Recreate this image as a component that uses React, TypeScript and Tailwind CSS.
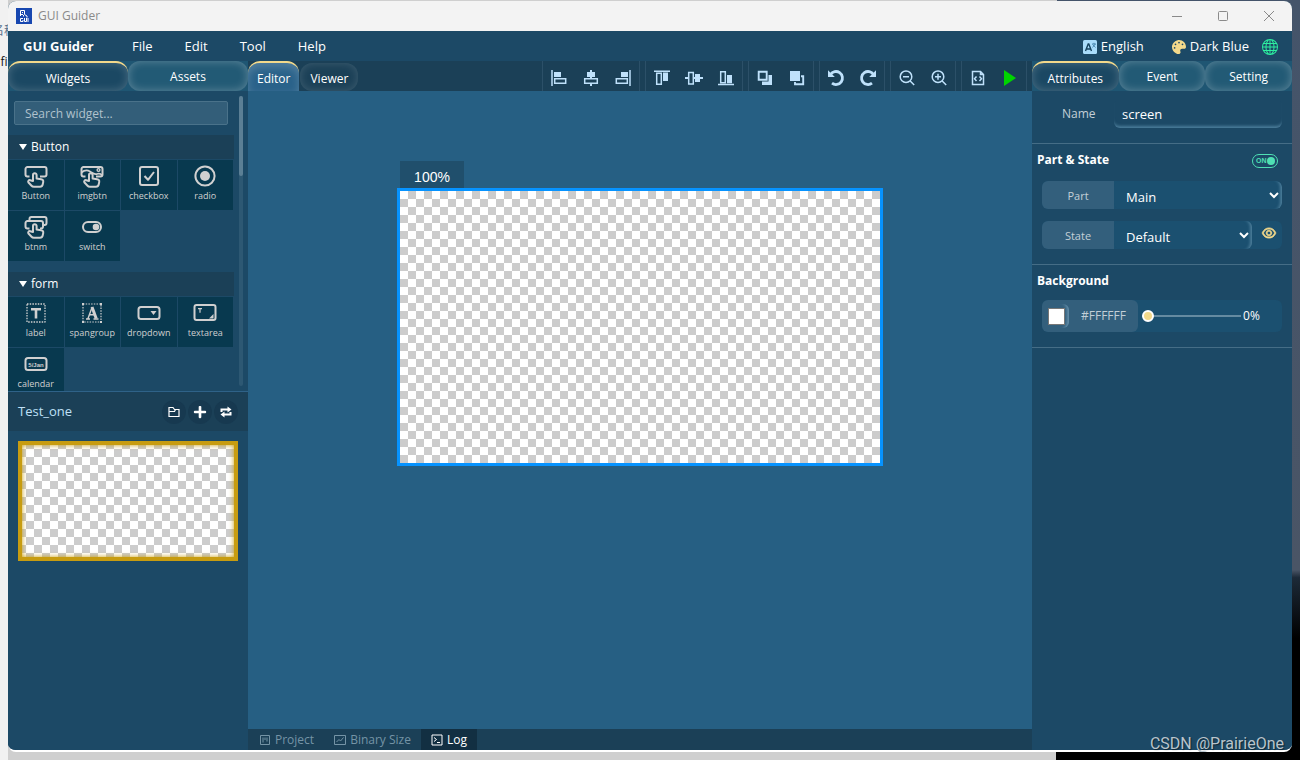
import { useState } from "react";
import type { ReactNode } from "react";
import { FaPalette, FaPlus } from "react-icons/fa";
import { AiOutlineEye } from "react-icons/ai";
import { BsGlobe } from "react-icons/bs";

/* -------------------- ICONS -------------------- */

const HAND =
  "M9 17v-6a1.800 1.800 0 0 1 3.600 0v3.500l4.500.8c1.700.3 2.400 1.200 2.100 2.800l-.5 2.400c-.3 1.500-1.200 2.200-2.700 2.200H10c-1.200 0-2-.4-2.700-1.200L4.500 18.500c-.9-1.100.2-2.700 1.700-2.300z";

function WidgetIcon({ children }: { children: ReactNode }) {
  return (
    <svg
      viewBox="0 0 24 24"
      className="size-6"
      fill="none"
      stroke="currentColor"
      strokeWidth="2"
      strokeLinejoin="round"
      aria-hidden="true"
    >
      {children}
    </svg>
  );
}

const icons: Record<string, ReactNode> = {
  Button: (
    <WidgetIcon>
      <path d="M5.500 12.500H3.500a2 2 0 0 1-2-2V5a2 2 0 0 1 2-2h17a2 2 0 0 1 2 2v5.500a2 2 0 0 1-2 2H16" />
      <path d={HAND} />
    </WidgetIcon>
  ),
  imgbtn: (
    <WidgetIcon>
      <path d="M5.500 12.500H3.500a2 2 0 0 1-2-2V5a2 2 0 0 1 2-2h17a2 2 0 0 1 2 2v5.500a2 2 0 0 1-2 2H16" />
      <path d="M1.500 8.500c3-2.500 6-2.500 8.500-1s4 3.500 7 2.500 4 0 5 1.500" strokeWidth="1.800" />
      <circle cx="18.500" cy="6" r="1.400" strokeWidth="1.400" />
      <path d={HAND} />
    </WidgetIcon>
  ),
  checkbox: (
    <WidgetIcon>
      <rect x="3" y="3" width="18" height="18" rx="2" />
      <path d="M7.500 12l3.500 3.800L17 8" />
    </WidgetIcon>
  ),
  radio: (
    <WidgetIcon>
      <circle cx="12" cy="12" r="9.600" />
      <circle cx="12" cy="12" r="5" fill="currentColor" stroke="none" />
    </WidgetIcon>
  ),
  btnm: (
    <WidgetIcon>
      <path d="M5.500 5V4a2 2 0 0 1 2-2h13a2 2 0 0 1 2 2v4a2 2 0 0 1-2 2H19" />
      <path d="M5.500 13.500H3.500a2 2 0 0 1-2-2V8a2 2 0 0 1 2-2H17a2 2 0 0 1 2 2v3.500a2 2 0 0 1-2 2h-1" />
      <path d={HAND} />
    </WidgetIcon>
  ),
  switch: (
    <WidgetIcon>
      <rect x="3" y="7" width="18" height="10" rx="5" />
      <circle cx="16" cy="12" r="3.300" fill="currentColor" stroke="none" />
    </WidgetIcon>
  ),
  label: (
    <WidgetIcon>
      <rect x="3" y="3" width="18" height="18" strokeWidth="1.300" strokeDasharray="1.500 1.200" />
      <path d="M7 8.200h10M12 8v9.500" strokeWidth="2.600" />
    </WidgetIcon>
  ),
  spangroup: (
    <WidgetIcon>
      <rect x="3" y="3" width="18" height="18" strokeWidth="1.200" strokeDasharray="1.500 1.200" />
      <path
        d="M2 2h2v2H2zM20 2h2v2h-2zM2 20h2v2H2zM20 20h2v2h-2z"
        fill="currentColor"
        stroke="none"
      />
      <path d="M6 18h4M13.500 18h5M8 17.500L12.200 6M9.500 13.800h5" strokeWidth="1.400" />
      <path d="M12 6l4.200 11.500" strokeWidth="3" />
    </WidgetIcon>
  ),
  dropdown: (
    <WidgetIcon>
      <rect x="1.500" y="6" width="21" height="12" rx="2.500" />
      <path d="M13.500 10h6l-3 4z" fill="currentColor" stroke="none" />
    </WidgetIcon>
  ),
  textarea: (
    <WidgetIcon>
      <rect x="1.500" y="4" width="21" height="15" rx="2" />
      <path d="M5 7.700h4M7 7.700v4" strokeWidth="1.200" />
      <path d="M20.500 13v4.500H16z" fill="currentColor" stroke="none" />
    </WidgetIcon>
  ),
  calendar: (
    <WidgetIcon>
      <rect x="1.500" y="6" width="21" height="12" rx="2.500" />
      <text
        x="12"
        y="14.500"
        textAnchor="middle"
        fontSize="6"
        fontWeight="700"
        fill="currentColor"
        stroke="none"
        fontFamily="Liberation Sans, sans-serif"
      >
        5/Jan
      </text>
    </WidgetIcon>
  ),
};

function ToolIcon({ children }: { children: ReactNode }) {
  return (
    <svg
      viewBox="0 0 18 18"
      className="size-[18px]"
      fill="none"
      stroke="currentColor"
      strokeWidth="1.500"
      aria-hidden="true"
    >
      {children}
    </svg>
  );
}

const solid = { fill: "currentColor", stroke: "none" };

const toolGroups: { name: string; icon: ReactNode }[][] = [
  [
    {
      name: "Align left",
      icon: (
        <ToolIcon>
          <path d="M2 1v16" />
          <path d="M4 3h7v5H4z" {...solid} />
          <path d="M4.700 9.700h11v4.600h-11z" />
        </ToolIcon>
      ),
    },
    {
      name: "Align center",
      icon: (
        <ToolIcon>
          <path d="M9 1v2M9 15v2M9 8v2" strokeWidth="2" />
          <path d="M5 3h8v5H5z" {...solid} />
          <path d="M2.700 9.700h12.600v4.600H2.700z" />
        </ToolIcon>
      ),
    },
    {
      name: "Align right",
      icon: (
        <ToolIcon>
          <path d="M16 1v16" />
          <path d="M7 3h7v5H7z" {...solid} />
          <path d="M2.300 9.700h11v4.600h-11z" />
        </ToolIcon>
      ),
    },
  ],
  [
    {
      name: "Align top",
      icon: (
        <ToolIcon>
          <path d="M1 2.300h16" />
          <path d="M3.700 4.200h4.600v11H3.700z" />
          <path d="M10 3.500h5V12h-5z" {...solid} />
        </ToolIcon>
      ),
    },
    {
      name: "Align middle",
      icon: (
        <ToolIcon>
          <path d="M0 9h4M14 9h4M8 9h2" strokeWidth="2" />
          <path d="M3.700 3.500h4.600v11.500H3.700z" />
          <path d="M10 5h5v8h-5z" {...solid} />
        </ToolIcon>
      ),
    },
    {
      name: "Align bottom",
      icon: (
        <ToolIcon>
          <path d="M1 15.500h16" />
          <path d="M3.700 2.700h4.600v11H3.700z" />
          <path d="M10 6h5v8.200h-5z" {...solid} />
        </ToolIcon>
      ),
    },
  ],
  [
    {
      name: "Bring forward",
      icon: (
        <ToolIcon>
          <path d="M2.700 2.700h8v8h-8z" strokeWidth="1.900" />
          <path d="M12.500 6H16v10H6v-3.500h6.500z" {...solid} />
        </ToolIcon>
      ),
    },
    {
      name: "Send backward",
      icon: (
        <ToolIcon>
          <path d="M2 2h10v10H2z" {...solid} />
          <path d="M13 7.200h2.200v8H7V13" strokeWidth="1.900" />
        </ToolIcon>
      ),
    },
  ],
  [
    {
      name: "Undo",
      icon: (
        <ToolIcon>
          <path d="M3.500 5.500A6.500 6.500 0 1 1 5 14.200" strokeWidth="2.800" />
          <path d="M1 1.200V8h6.800z" {...solid} />
        </ToolIcon>
      ),
    },
    {
      name: "Redo",
      icon: (
        <ToolIcon>
          <path d="M14.500 5.500A6.500 6.500 0 1 0 13 14.200" strokeWidth="2.800" />
          <path d="M17 1.200V8h-6.800z" {...solid} />
        </ToolIcon>
      ),
    },
  ],
  [
    {
      name: "Zoom out",
      icon: (
        <ToolIcon>
          <circle cx="8" cy="7.700" r="5.800" />
          <path d="M12.200 12l4 4M5 7.700h6" />
        </ToolIcon>
      ),
    },
    {
      name: "Zoom in",
      icon: (
        <ToolIcon>
          <circle cx="8" cy="7.700" r="5.800" />
          <path d="M12.200 12l4 4M5 7.700h6M8 4.700v6" />
        </ToolIcon>
      ),
    },
  ],
  [
    {
      name: "Generate code",
      icon: (
        <ToolIcon>
          <path d="M3.500 2.500h8l3 3v10h-11zM11.500 2.500v3h3" />
          <path d="M7.500 7.500l-2 2.200 2 2.200M10.500 7.500l2 2.200-2 2.200" />
        </ToolIcon>
      ),
    },
    {
      name: "Run",
      icon: (
        <ToolIcon>
          <path d="M3 1l12 8-12 8z" fill="#00d400" stroke="none" />
        </ToolIcon>
      ),
    },
  ],
];

function AppLogo() {
  return (
    <svg viewBox="0 0 16 16" className="size-4" aria-hidden="true">
      <path d="M0 0h16v16H0z" fill="#1747b0" />
      <g fill="none" stroke="#fff" strokeWidth="1">
        <path d="M4.500 8V2.500h4v4l2.500 1.500v1.500M6 4l1 1M5 6.500h2M7.500 7v1.500" />
        <path d="M7 10.500H4.500v3H7v-1.500M8.500 10v3.500h2V10M12 10v4" />
      </g>
    </svg>
  );
}

/* -------------------- DATA -------------------- */

const widgetGroups = [
  { title: "Button", items: ["Button", "imgbtn", "checkbox", "radio", "btnm", "switch"] },
  { title: "form", items: ["label", "spangroup", "dropdown", "textarea", "calendar"] },
];

const footerTabs = [
  {
    name: "Project",
    icon: <path d="M1.500 1.500h9v9h-9zM4 3.500v5M6 3.500v2.500M8 3.500v4" />,
  },
  {
    name: "Binary Size",
    icon: <path d="M.5 1.500h11v9H.5zM2.500 8l2.500-2.500 1.500 1.500L9.500 3.500" />,
  },
  {
    name: "Log",
    icon: <path d="M1 1h10v10H1zM3 3.500l2.500 2L3 7.500M6 8.500h3" />,
  },
];

/* -------------------- TABS -------------------- */

type TabProps = { name: string; active: boolean; onClick: () => void };

function PanelTab({ name, active, onClick }: TabProps) {
  return (
    <button
      onClick={onClick}
      className={
        active
          ? "flex-1 rounded-xl border-t-2 border-[#f3d98b] bg-[#1b4863] pt-1 text-[12px] text-white shadow-[inset_0_0_10px_#ffffff38]"
          : "flex-1 rounded-xl bg-[#225a75] pt-px text-[12px] text-white shadow-[inset_0_0_10px_#ffffff48]"
      }
    >
      {name}
    </button>
  );
}

/* -------------------- LEFT PANEL -------------------- */

function LeftPanel() {
  const [tab, setTab] = useState("Widgets");

  return (
    <aside className="flex w-60 shrink-0 flex-col bg-[#1c4966]">
      <div className="flex h-[30px] bg-[#1f5673]">
        {["Widgets", "Assets"].map((t) => (
          <PanelTab key={t} name={t} active={t === tab} onClick={() => setTab(t)} />
        ))}
      </div>

      {/* WIDGET LIST */}
      <div className="flex h-[300px] gap-[5px]">
        <div className="w-[226px] overflow-hidden">
          <div className="px-1.5 pt-2.5">
            <input
              aria-label="Search widget"
              placeholder="Search widget..."
              className="block h-6 w-full rounded-xs border border-[#4a728a] bg-[#335e79] px-2.5 text-[12px] text-white placeholder:text-[#b0c2cd]"
            />
          </div>
          {widgetGroups.map((g) => (
            <section key={g.title} className="pt-2.5 pb-px">
              <button className="mb-px flex h-6 w-full items-center gap-1 bg-[#1b4057] pl-[11px] text-[12px] text-white">
                <svg viewBox="0 0 8 6" className="h-1.5 w-2" aria-hidden="true">
                  <path d="M0 0h8L4 6z" fill="#fff" />
                </svg>
                {g.title}
              </button>
              <ul className="grid grid-cols-4 gap-px pr-px">
                {g.items.map((w) => (
                  <li
                    key={w}
                    className="flex h-[50px] flex-col items-center bg-[#08394f] pt-1 text-[9px] leading-4 text-[#d0d0d0]"
                  >
                    {icons[w]}
                    <span>{w}</span>
                  </li>
                ))}
              </ul>
            </section>
          ))}
        </div>
        <div className="my-[5px] w-1 rounded-sm bg-[#2d5873]">
          <div className="h-20 rounded-sm bg-[#5b7f95]" />
        </div>
      </div>

      {/* SCREENS */}
      <div className="flex h-10 items-center border-t border-[#2f6288] bg-[#1b4057] px-2.5">
        <h2 className="flex-1 text-[13px] text-[#bfe0f8]">Test_one</h2>
        <div className="flex gap-0.5 text-white">
          <button
            aria-label="Open folder"
            className="flex size-6 items-center justify-center rounded-full bg-[#173950]"
          >
            <svg viewBox="0 0 12 12" className="size-3" fill="none" stroke="currentColor" strokeWidth="1.200">
              <path d="M1 10.500v-9h4l1.500 2H11v7zM1 5.500h5.500l1-2" />
            </svg>
          </button>
          <button
            aria-label="Add screen"
            className="flex size-6 items-center justify-center rounded-full bg-[#173950]"
          >
            <FaPlus className="size-3.5" />
          </button>
          <button
            aria-label="Refresh"
            className="flex size-6 items-center justify-center rounded-full bg-[#173950]"
          >
            <svg viewBox="0 0 12 12" className="size-3" fill="none" stroke="currentColor" strokeWidth="2">
              <path d="M1.500 6V3.500H8M10.500 6v2.500H4" />
              <path d="M7.500.5v6l4-3zM4.500 5.500v6l-4-3z" fill="currentColor" stroke="none" />
            </svg>
          </button>
        </div>
      </div>
      <div className="p-2.5">
        <button
          aria-label="screen"
          className="block h-[120px] w-full bg-[conic-gradient(#cccccc_25%,#ffffff_0_50%,#cccccc_0_75%,#ffffff_0)] bg-[length:16px_16px] shadow-[inset_0_0_0_4px_#c79c10,inset_0_0_5px_4px_#c79c10]"
        />
      </div>
    </aside>
  );
}

/* -------------------- EDITOR -------------------- */

function EditorPanel() {
  const [tab, setTab] = useState("Editor");
  const [bottomTab, setBottomTab] = useState("Log");

  return (
    <main className="flex min-w-0 flex-1 flex-col bg-[#265f83]">
      <div className="flex h-[30px] items-stretch bg-[#1b4057]">
        {["Editor", "Viewer"].map((t) => (
          <button
            key={t}
            onClick={() => setTab(t)}
            className={
              t === tab
                ? "rounded-t-xl border-t-2 border-[#f3d98b] bg-[#2a628a] px-[9px] pt-1 text-[12px] text-white shadow-[inset_0_4px_9px_#ffffff30]"
                : "mt-0.5 ml-px rounded-xl bg-[#1b4057] px-2.5 pt-1 text-[12px] text-white shadow-[inset_0_0_10px_#ffffff28]"
            }
          >
            {t}
          </button>
        ))}
        <div className="ml-auto flex gap-[5px] pr-[5px] text-[#bfe1fb]">
          {toolGroups.map((group, i) => (
            <div key={i} className="flex border-x border-[#2c5068]">
              {group.map((tool) => (
                <button
                  key={tool.name}
                  aria-label={tool.name}
                  className="flex w-8 items-center justify-center pt-1"
                >
                  {tool.icon}
                </button>
              ))}
            </div>
          ))}
        </div>
      </div>

      {/* CANVAS */}
      <div className="flex flex-1 flex-col items-center pt-[70px]">
        <div>
          <div className="ml-[3px] flex h-[27px] w-16 items-center justify-center bg-[#204f6c] pt-1.5 font-['Liberation_Sans',sans-serif] text-[14px] text-white">
            100%
          </div>
          <div className="h-[278px] w-[486px] border-3 border-[#0693ff] bg-[conic-gradient(#cccccc_25%,#ffffff_0_50%,#cccccc_0_75%,#ffffff_0)] bg-[length:16px_16px]" />
        </div>
      </div>

      <div className="flex h-[21px] bg-[#1b4057] pl-px">
        {footerTabs.map((t) => (
          <button
            key={t.name}
            onClick={() => setBottomTab(t.name)}
            className={
              t.name === bottomTab
                ? "flex items-center gap-1 bg-[#122f42] px-2.5 text-[12px] text-white"
                : "flex items-center gap-1 px-2.5 text-[12px] text-[#7594a6]"
            }
          >
            <svg viewBox="0 0 12 12" className="size-3" fill="none" stroke="currentColor" strokeWidth="1">
              {t.icon}
            </svg>
            {t.name}
          </button>
        ))}
      </div>
    </main>
  );
}

/* -------------------- RIGHT PANEL -------------------- */

function RightPanel() {
  const [tab, setTab] = useState("Attributes");
  const [name, setName] = useState("screen");
  const [on, setOn] = useState(true);
  const [color, setColor] = useState("#ffffff");
  const [opacity, setOpacity] = useState(0);

  return (
    <aside className="flex w-[260px] shrink-0 flex-col bg-[#1c4966]">
      <div className="flex h-[30px] bg-[#1f5673]">
        {["Attributes", "Event", "Setting"].map((t) => (
          <PanelTab key={t} name={t} active={t === tab} onClick={() => setTab(t)} />
        ))}
      </div>

      <div className="flex items-center border-b border-[#456d86] pt-2 pr-2.5 pb-[15px]">
        <label htmlFor="name" className="w-[82px] pl-[30px] text-[12px] text-[#c3cfd7]">
          Name
        </label>
        <input
          id="name"
          value={name}
          onChange={(e) => setName(e.target.value)}
          className="h-[29px] min-w-0 flex-1 rounded-md px-2 text-[13px] text-white shadow-[inset_0_-4px_3px_-2px_#4b7c99]"
        />
      </div>

      {/* PART & STATE */}
      <section className="border-b border-[#456d86] pt-1.5 pb-[15px]">
        <div className="flex h-5 items-center justify-between pr-3.5 pl-[5px]">
          <h3 className="text-[12px] font-bold text-white">Part &amp; State</h3>
          <label className="relative mt-0.5 block cursor-pointer">
            <input
              type="checkbox"
              aria-label="Show part and state"
              checked={on}
              onChange={(e) => setOn(e.target.checked)}
              className="sr-only"
            />
            <span className="flex h-3.5 w-[26px] items-center justify-between rounded-full border border-[#4fe0b4] pr-0.5 pl-[3px] font-['Liberation_Sans',sans-serif] text-[7px] font-bold text-[#4fe0b4]">
              {on ? "ON" : ""}
              <span className="size-2 rounded-full bg-[#4fe0b4]" />
            </span>
          </label>
        </div>
        <div className="flex flex-col gap-3 px-2.5 pt-[11px]">
          <div className="flex h-7 overflow-hidden rounded-md bg-[#1b5070]">
            <label
              htmlFor="part"
              className="flex w-[72px] items-center justify-center bg-[#335f7c] pt-0.5 text-[11px] text-[#c3cfd7]"
            >
              Part
            </label>
            <select
              id="part"
              className="min-w-0 flex-1 rounded-md bg-[#1b5070] px-2 pt-1 text-[13px] text-white shadow-[inset_-5px_0_3px_-3px_#4b7c99]"
            >
              <option>Main</option>
            </select>
          </div>
          <div className="flex h-7 overflow-hidden rounded-md bg-[#1b5070]">
            <label
              htmlFor="state"
              className="flex w-[72px] items-center justify-center bg-[#335f7c] pt-0.5 text-[11px] text-[#c3cfd7]"
            >
              State
            </label>
            <select
              id="state"
              className="min-w-0 flex-1 rounded-md bg-[#1b5070] px-2 pt-1 text-[13px] text-white shadow-[inset_-5px_0_3px_-3px_#4b7c99]"
            >
              <option>Default</option>
            </select>
            <button aria-label="Preview state" className="w-[30px] pb-1 pl-[9px] text-[#f3d98b]">
              <AiOutlineEye className="size-4 overflow-visible" strokeWidth="50" />
            </button>
          </div>
        </div>
      </section>

      {/* BACKGROUND */}
      <section className="border-b border-[#456d86] pt-1.5 pb-[15px]">
        <h3 className="px-[5px] text-[12px] leading-5 font-bold text-white">Background</h3>
        <div className="mx-2.5 mt-[9px] flex h-8 items-center rounded-md bg-[#1b5070]">
          <div className="flex h-8 w-24 items-center rounded-md bg-[#335f7c]">
            <div className="flex h-6 w-[27px] items-center justify-center rounded-md pl-0.5 shadow-[inset_-5px_0_3px_-3px_#6590ab]">
              <input
                type="color"
                aria-label="Background color"
                value={color}
                onChange={(e) => setColor(e.target.value)}
                className="size-[17px] appearance-none border border-[#777777] [&::-webkit-color-swatch]:border-0 [&::-webkit-color-swatch-wrapper]:p-0"
              />
            </div>
            <span className="flex-1 text-center text-[12px] text-[#c3cfd7]">
              {color.toUpperCase()}
            </span>
          </div>
          <input
            type="range"
            min={0}
            max={100}
            aria-label="Background opacity"
            value={opacity}
            onChange={(e) => setOpacity(Number(e.target.value))}
            className="ml-1 h-0.5 w-[99px] appearance-none bg-[#658ba1] [&::-webkit-slider-thumb]:size-3 [&::-webkit-slider-thumb]:appearance-none [&::-webkit-slider-thumb]:rounded-full [&::-webkit-slider-thumb]:border-2 [&::-webkit-slider-thumb]:border-white [&::-webkit-slider-thumb]:bg-[#f3d98b]"
          />
          <span className="ml-0.5 text-[12px] text-white">{opacity}%</span>
        </div>
      </section>
    </aside>
  );
}

/* -------------------- APP -------------------- */

export default function App() {
  return (
    <div className="relative flex min-h-screen bg-[linear-gradient(to_right,#cfcfcf_81.2%,#000000_0)] font-['Open_Sans',sans-serif]">
      {/* page behind the window, left edge */}
      <div className="flex w-2 shrink-0 flex-col items-center overflow-hidden bg-[#f1f1f1] pt-[22px] text-[12px] leading-4 whitespace-nowrap">
        <span className="font-['Noto_Sans_CJK_SC',sans-serif] text-[#56708c]">名称</span>
        <span className="mt-4 text-[#111111]">fi</span>
      </div>

      <div className="flex min-w-0 flex-1 flex-col bg-[linear-gradient(to_right,#cfcfcf_81.7%,#44546a_0)] bg-[length:100%_20px] bg-no-repeat pt-px pb-2">
        <div className="flex flex-1 flex-col overflow-hidden rounded-lg border-b-2 border-white bg-[#1c4966]">
          {/* TITLE BAR */}
          <header className="flex h-[30px] items-center bg-[#f3f3f3] pl-2 text-[12px] text-[#8a8a8a]">
            <AppLogo />
            <span className="flex-1 pl-1.5">GUI Guider</span>
            <div className="flex">
              <button aria-label="Minimize" className="flex w-[46px] justify-center">
                <svg viewBox="0 0 12 12" className="size-3" fill="none" stroke="currentColor">
                  <path d="M1 6.500h10" />
                </svg>
              </button>
              <button aria-label="Maximize" className="flex w-[46px] justify-center">
                <svg viewBox="0 0 12 12" className="size-3" fill="none" stroke="currentColor">
                  <rect x="1.500" y="1.500" width="9" height="9" rx="1" />
                </svg>
              </button>
              <button aria-label="Close" className="flex w-[46px] justify-center">
                <svg viewBox="0 0 12 12" className="size-3" fill="none" stroke="currentColor">
                  <path d="M1 1l10 10M11 1L1 11" />
                </svg>
              </button>
            </div>
          </header>

          {/* MENU BAR */}
          <nav className="flex h-[30px] items-center pt-0.5 pl-[15px] text-[13px] text-white">
            <span className="w-[94px] font-bold">GUI Guider</span>
            <div className="flex flex-1">
              <button className="px-[15px]">File</button>
              <button className="pr-4 pl-[17px]">Edit</button>
              <button className="px-4">Tool</button>
              <button className="px-4">Help</button>
            </div>
            <button className="flex items-center gap-1">
              <svg viewBox="0 0 14 14" className="size-3.5" aria-hidden="true">
                <rect width="14" height="14" rx="1.500" fill="#a9dcfb" />
                <path
                  d="M2.500 11L5.200 4h.6l2.700 7M3.500 9h4"
                  fill="none"
                  stroke="#16435f"
                  strokeWidth="1.400"
                />
                <path d="M9 4h4M11 2.800V4M9.500 7.500L12.300 4M9.700 4.500l2.800 3" fill="none" stroke="#2d6f9a" strokeWidth=".7" />
              </svg>
              English
            </button>
            <button className="ml-7 flex items-center gap-1">
              <FaPalette className="size-3.5 text-[#f3d98b]" />
              Dark Blue
            </button>
            <button aria-label="Website" className="mr-3.5 ml-[13px] text-[#2df0a0]">
              <BsGlobe className="size-4" />
            </button>
          </nav>

          <div className="flex flex-1">
            <LeftPanel />
            <EditorPanel />
            <RightPanel />
          </div>
        </div>
      </div>

      {/* wallpaper, right edge */}
      <div className="w-2 shrink-0 bg-[linear-gradient(#44546a,#4a5566_75%,#1d2a38_76%,#000000_84%)]" />

      <div className="pointer-events-none absolute right-4 bottom-1.5 font-['Roboto',sans-serif] text-[16px] leading-5 text-[#b8c4cc] [text-shadow:1px_1px_1px_#00000080]">
        CSDN @PrairieOne
      </div>
    </div>
  );
}
